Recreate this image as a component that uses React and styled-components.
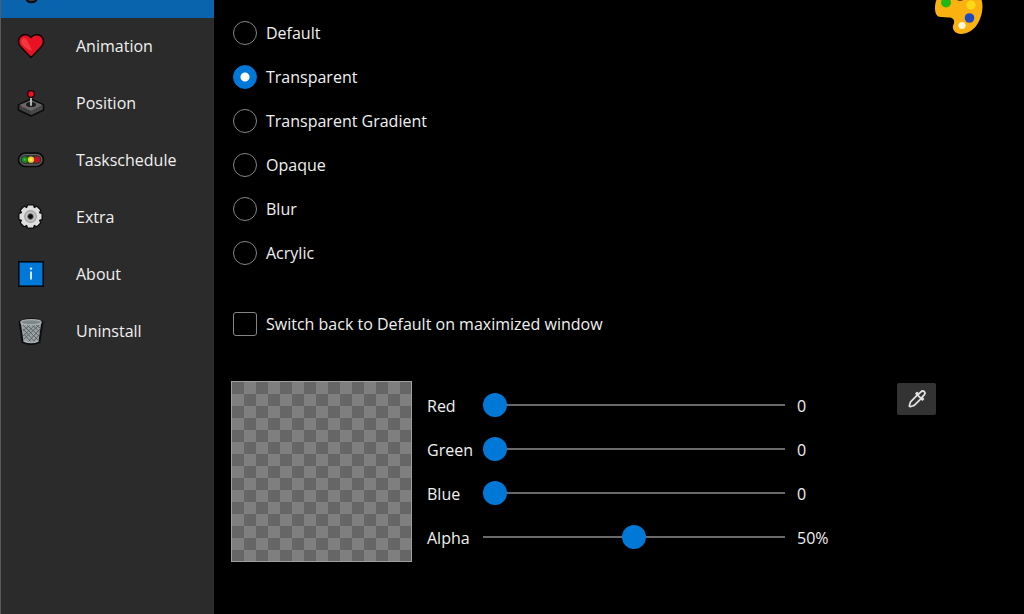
import React, { useState } from 'react';
import styled, { createGlobalStyle } from 'styled-components';

const PaletteIcon = ({ size }) => (
  <svg width={size} height={size} viewBox="0 0 48 48" aria-hidden="true">
    <path
      d="M24 0C38 0 47.5 8 47.5 20C47.5 34 39 48 26 48C19 48 16.5 42 18.5 38.5C20.5 34.5 18 31.5 14 31.5L6 31C2 31 0 28 0 22C0 9 10 0 24 0Z"
      fill="#fbb110"
    />
    <ellipse cx="25" cy="12" rx="4" ry="2.8" fill="#17120a" />
    <circle cx="11" cy="16.5" r="5" fill="#1fb814" />
    <circle cx="36" cy="19" r="4.6" fill="#fbd914" />
    <circle cx="34.5" cy="32" r="4.8" fill="#1d49c4" />
    <circle cx="27" cy="39.5" r="3.6" fill="#fff6d8" />
  </svg>
);

const icons = {
  style: (
    <>
      <circle cx="14" cy="13" r="11" fill="#d98f12" />
      <path d="M8 21C8 25 11 27 15 26C18 26 19 23 19 21" fill="#3b3b3b" stroke="#0c0c0c" strokeWidth="2" />
    </>
  ),
  animation: (
    <>
      <path
        d="M13 24.5L2.5 13.5C-0.5 10 0 5.5 3 3C6 0.8 10.5 1.2 13 4.5C15.5 1.2 20 0.8 23 3C26 5.5 26.5 10 23.5 13.5Z"
        fill="#e81224"
        stroke="#150406"
        strokeWidth="1.6"
        strokeLinejoin="round"
      />
      <path d="M3.5 10C2.5 7 4.5 4.5 7 5C9 6 9.5 9 12 13L14 18C9 16.5 5 13 3.5 10Z" fill="#f5484c" opacity="0.7" />
    </>
  ),
  position: (
    <>
      <path d="M13 9L25.5 15V20L13 26L0.5 20V15Z" fill="#3f3f3f" stroke="#0b0b0b" strokeWidth="1.6" strokeLinejoin="round" />
      <path d="M13 10L24.5 15L13 21L1.5 15Z" fill="#686868" />
      <path d="M13 21L24.5 15.5V19.5L13 25Z" fill="#474747" />
      <ellipse cx="13" cy="14.5" rx="5" ry="2.6" fill="#1b1b1b" />
      <path d="M13 7V15" stroke="#c4c4c4" strokeWidth="1.8" strokeLinecap="round" />
      <circle cx="13" cy="4" r="3.4" fill="#e81224" stroke="#1a0507" strokeWidth="1.2" />
      <circle cx="4.8" cy="16.7" r="0.8" fill="#e33b46" />
    </>
  ),
  task: (
    <>
      <rect x="0.5" y="6" width="25" height="13.5" rx="6.7" fill="#343434" stroke="#090909" strokeWidth="1.6" />
      <rect x="2.1" y="7.6" width="21.8" height="10.3" rx="5.1" fill="none" stroke="#696969" />
      <circle cx="7" cy="12.7" r="3.1" fill="#138a1d" />
      <circle cx="13" cy="12.7" r="3.1" fill="#f4cc22" />
      <circle cx="19" cy="12.7" r="3.1" fill="#c41320" />
      <circle cx="6.6" cy="12.7" r="1.1" fill="#3fc247" />
      <circle cx="13" cy="12.7" r="1.2" fill="#fff07c" />
    </>
  ),
  extra: (
    <>
      <path
        d="M10 1.5H15L16 4.2L18.8 3L22 6.2L20.8 9L23.5 10V15L20.8 16L22 18.8L18.8 22L16 20.8L15 23.5H10L9 20.8L6.2 22L3 18.8L4.2 16L1.5 15V10L4.2 9L3 6.2L6.2 3L9 4.2Z"
        fill="#dedede"
        stroke="#0d0d0d"
        strokeWidth="2.6"
        strokeLinejoin="round"
        paintOrder="stroke"
      />
      <circle cx="12.5" cy="12.5" r="5.8" fill="#c4c4c4" stroke="#a0a0a0" strokeWidth="1.2" />
      <circle cx="12.5" cy="12.5" r="2.9" fill="#0e0e0e" stroke="#8a8a8a" strokeWidth="0.8" />
    </>
  ),
  about: (
    <>
      <rect x="0.8" y="0.8" width="24.4" height="24.4" fill="#0078d7" stroke="#07090c" strokeWidth="1.6" />
      <path d="M13 10.5V18.5" stroke="#eef6fd" strokeWidth="1.8" />
      <circle cx="13" cy="7.6" r="1.2" fill="#eef6fd" />
    </>
  ),
  uninstall: (
    <>
      <path d="M1.6 4L4.6 24Q13 28 21.4 24L24.4 4Q13 -2 1.6 4Z" fill="#9aa2a6" stroke="#0d0d0d" strokeWidth="2" strokeLinejoin="round" />
      <path
        d="M5 7L20 22M9 7L21 18M14 7L22 14M18 7L22 10M5 11L17 24M6 16L13 24M21 7L6 21M17 7L5 18M12 7L5 13M22 11L10 24M21 17L15 24"
        stroke="#565d61"
        strokeWidth="0.9"
      />
      <ellipse cx="13" cy="4.2" rx="10.2" ry="2.6" fill="#7f878b" stroke="#aab1b4" strokeWidth="1.3" />
      <path d="M5.6 23Q13 26 20.4 23" fill="none" stroke="#a9b0b3" strokeWidth="1.4" />
    </>
  ),
};

const menuItems = [
  { id: 'animation', label: 'Animation' },
  { id: 'position', label: 'Position' },
  { id: 'task', label: 'Taskschedule' },
  { id: 'extra', label: 'Extra' },
  { id: 'about', label: 'About' },
  { id: 'uninstall', label: 'Uninstall' },
];

const styleOptions = ['Default', 'Transparent', 'Transparent Gradient', 'Opaque', 'Blur', 'Acrylic'];

const channels = [
  { id: 'red', label: 'Red', max: 255 },
  { id: 'green', label: 'Green', max: 255 },
  { id: 'blue', label: 'Blue', max: 255 },
  { id: 'alpha', label: 'Alpha', max: 100, unit: '%' },
];

function App() {
  const [taskbarStyle, setTaskbarStyle] = useState('Transparent');
  const [switchBack, setSwitchBack] = useState(false);
  const [color, setColor] = useState({ red: 0, green: 0, blue: 0, alpha: 50 });

  const handleColorChange = (id) => (e) => {
    setColor({ ...color, [id]: Number(e.target.value) });
  };

  return (
    <>
      <GlobalStyle />
      <Layout>
        <Sidebar>
          <MenuItem href="#style" aria-label="Style" $active>
            <MenuIcon viewBox="0 0 26 26">{icons.style}</MenuIcon>
          </MenuItem>
          {menuItems.map((item) => (
            <MenuItem key={item.id} href={`#${item.id}`}>
              <MenuIcon viewBox="0 0 26 26" aria-hidden="true">{icons[item.id]}</MenuIcon>
              {item.label}
            </MenuItem>
          ))}
        </Sidebar>
        <Content>
          <Header>
            <div>
              {styleOptions.map((option) => (
                <Option key={option}>
                  <Radio
                    type="radio"
                    name="taskbar-style"
                    checked={taskbarStyle === option}
                    onChange={() => setTaskbarStyle(option)}
                  />
                  {option}
                </Option>
              ))}
            </div>
            <HeaderIcon>
              <PaletteIcon size={48} />
            </HeaderIcon>
          </Header>
          <SwitchOption>
            <Checkbox type="checkbox" checked={switchBack} onChange={(e) => setSwitchBack(e.target.checked)} />
            Switch back to Default on maximized window
          </SwitchOption>
          <ColorPanel>
            <Preview>
              <PreviewColor
                style={{ backgroundColor: `rgba(${color.red}, ${color.green}, ${color.blue}, ${color.alpha / 100})` }}
              />
            </Preview>
            <Sliders>
              {channels.map(({ id, label, max, unit }) => (
                <SliderRow key={id}>
                  <SliderLabel htmlFor={id}>{label}</SliderLabel>
                  <Slider id={id} type="range" min="0" max={max} value={color[id]} onChange={handleColorChange(id)} />
                  <SliderValue htmlFor={id}>{color[id]}{unit}</SliderValue>
                </SliderRow>
              ))}
            </Sliders>
            <PickerButton type="button" aria-label="Pick color">
              <svg width="20" height="20" viewBox="0 0 22 22" fill="none" stroke="#e2e2e2" strokeWidth="1.9" strokeLinejoin="round" strokeLinecap="round">
                <path d="M11.5 6.5L4.2 13.8C3 15 3.6 16.5 2.6 18.2Q2.4 19.6 3.8 19.4C5.5 18.4 7 19 8.2 17.8L15.5 10.5" />
                <path d="M10 5L17 12L18 11L16.3 9.2L18.5 7C20 5.5 20 4 19 3C18 2 16.5 2 15 3.5L12.8 5.7L11 4Z" />
              </svg>
            </PickerButton>
          </ColorPanel>
        </Content>
      </Layout>
    </>
  );
}

const GlobalStyle = createGlobalStyle`
  * {
    box-sizing: border-box;
  }

  body {
    margin: 0;
    background: #000;
    color: #f0f0f0;
    font-family: 'Segoe UI', 'Open Sans', sans-serif;
    font-size: 16px;
    line-height: 24px;
    overflow: hidden;
  }
`;

const Layout = styled.div`
  display: flex;
  height: 100vh;
  overflow: hidden;
`;

const Sidebar = styled.nav`
  flex: 0 0 214px;
  margin-top: -39px;
  background: #2b2b2b;
  border-left: 1px solid #5a5a5a;
`;

const MenuItem = styled.a`
  display: flex;
  align-items: center;
  gap: 32px;
  height: 57px;
  padding: 0 0 2px 17px;
  color: inherit;
  text-decoration: none;
  background: ${({ $active }) => ($active ? '#0a64ad' : 'transparent')};
`;

const MenuIcon = styled.svg`
  width: 26px;
  height: 26px;
  overflow: visible;
`;

const Content = styled.main`
  flex: 1;
  padding: 11px 41px 0 17px;
`;

const Header = styled.div`
  display: flex;
  justify-content: space-between;
`;

const HeaderIcon = styled.div`
  height: 48px;
  margin-top: -25px;
`;

const Option = styled.label`
  display: flex;
  align-items: center;
  gap: 9px;
  height: 44px;
  padding-left: 2px;
`;

const SwitchOption = styled(Option)`
  margin-top: 27px;
`;

const Radio = styled.input`
  appearance: none;
  width: 24px;
  height: 24px;
  margin: 0;
  border: 1px solid #858585;
  border-radius: 50%;

  &:checked {
    border-color: #0078d7;
    background: radial-gradient(circle, #fff 4px, #0078d7 5px);
  }
`;

const Checkbox = styled.input`
  appearance: none;
  width: 24px;
  height: 24px;
  margin: 0;
  border: 1px solid #858585;
  border-radius: 3px;

  &:checked {
    background: #0078d7;
  }
`;

const ColorPanel = styled.div`
  display: flex;
  align-items: flex-start;
  margin-top: 35px;
`;

const Preview = styled.div`
  width: 181px;
  height: 181px;
  border: 1px solid #a0a0a0;
  background: repeating-conic-gradient(#fff 0 25%, #ccc 0 50%) 0 0 / 24px 24px;
`;

const PreviewColor = styled.div`
  height: 100%;
`;

const Sliders = styled.div`
  margin: 2px 0 0 15px;
`;

const SliderRow = styled.div`
  display: grid;
  grid-template-columns: 44px 302px 40px;
  column-gap: 12px;
  align-items: center;
  height: 44px;
`;

const SliderLabel = styled.label`
  padding-top: 2px;
`;

const SliderValue = styled.output`
  padding-top: 2px;
`;

const Slider = styled.input`
  appearance: none;
  width: 100%;
  height: 24px;
  margin: 0;
  background: linear-gradient(#6a6a6a, #6a6a6a) center / 100% 2px no-repeat;

  &::-webkit-slider-thumb {
    appearance: none;
    width: 24px;
    height: 24px;
    border-radius: 50%;
    background: #0078d7;
  }
`;

const PickerButton = styled.button`
  display: flex;
  align-items: center;
  justify-content: center;
  width: 39px;
  height: 32px;
  margin: 2px 47px 0 auto;
  padding: 0;
  border: 0;
  border-radius: 2px;
  background: #333;
`;

export default App;
